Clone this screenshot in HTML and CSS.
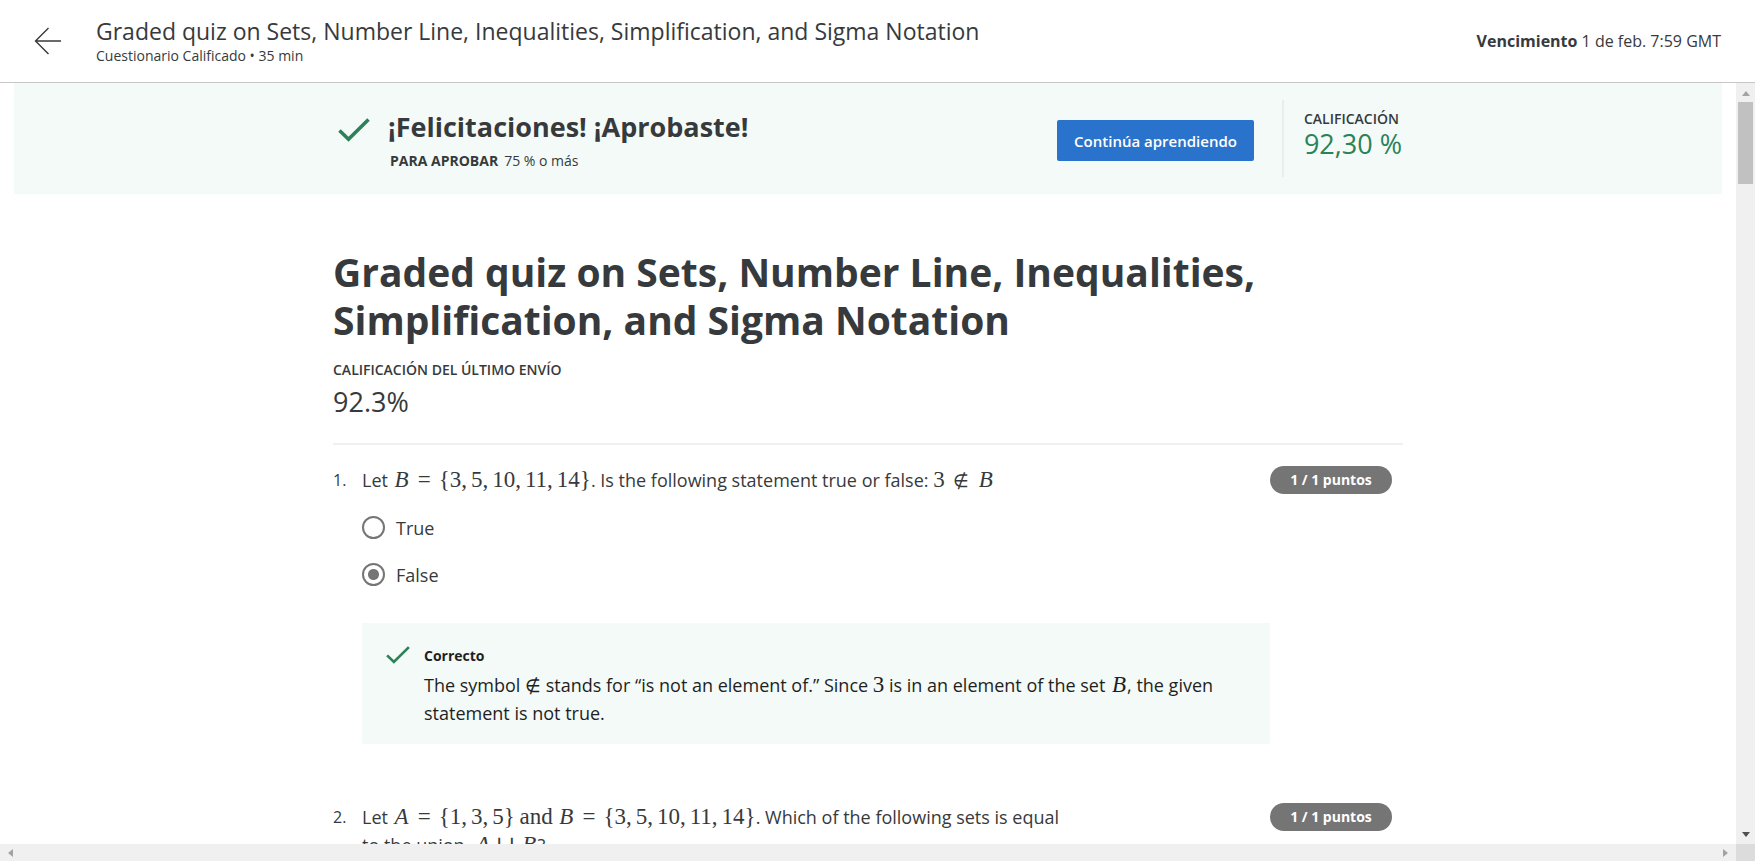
FILE: index.html
```html
<!DOCTYPE html>
<html lang="es">
<head>
<meta charset="utf-8">
<meta name="viewport" content="width=device-width, initial-scale=1">
<title>Graded quiz</title>
<link rel="stylesheet" href="styles.css">
</head>
<body>
<div class="page">
  <header class="topbar">
    <a class="back" href="#" aria-label="Volver">
      <svg viewBox="0 0 28 28" width="28" height="28" fill="none" stroke="currentColor" stroke-width="1.4"><path d="M27 14H1.5M14.500 1L1.500 14L14.500 27"/></svg>
    </a>
    <div class="topbar-text">
      <div class="topbar-title">Graded quiz on Sets, Number Line, Inequalities, Simplification, and Sigma Notation</div>
      <div class="topbar-sub">Cuestionario Calificado • 35 min</div>
    </div>
    <div class="due"><strong>Vencimiento</strong> 1 de feb. 7:59 GMT</div>
  </header>
  <main class="content">
    <section class="banner">
      <div class="banner-inner">
        <svg class="check" viewBox="0 0 32 24" width="32" height="24" fill="none" stroke="currentColor" stroke-width="3.6"><path d="M1.500 12.500L10.500 21.200L30.500 1.500"/></svg>
        <div class="banner-text">
          <h2>¡Felicitaciones! ¡Aprobaste!</h2>
          <p><strong>PARA APROBAR</strong>75 % o más</p>
        </div>
        <button class="continue" type="button">Continúa aprendiendo</button>
        <div class="grade">
          <div class="label">CALIFICACIÓN</div>
          <div class="grade-value">92,30 %</div>
        </div>
      </div>
    </section>
    <div class="column">
      <h1>Graded quiz on Sets, Number Line, Inequalities, Simplification, and Sigma Notation</h1>
      <div class="label">CALIFICACIÓN DEL ÚLTIMO ENVÍO</div>
      <div class="score">92.3%</div>
      <section class="question">
        <div class="number">1.</div>
        <div class="prompt" id="q1">Let <span class="math"><i>B</i><span class="rel">=</span>{3<span class="sep">,</span>5<span class="sep">,</span>10<span class="sep">,</span>11<span class="sep">,</span>14}</span>. Is the following statement true or false: <span class="math">3<span class="rel notin">∉</span><i>B</i></span></div>
        <div class="points">1 / 1 puntos</div>
        <div class="answers" role="radiogroup" aria-labelledby="q1">
          <label class="option"><input type="radio" name="q1">True</label>
          <label class="option"><input type="radio" name="q1" checked>False</label>
          <div class="feedback">
            <svg class="check" viewBox="0 0 32 24" width="24" height="18" fill="none" stroke="currentColor" stroke-width="3.6"><path d="M1.500 12.500L10.500 21.200L30.500 1.500"/></svg>
            <div>
              <div class="verdict">Correcto</div>
              <p>The symbol <span class="math notin">∉</span> stands for “is not an element of.” Since <span class="math">3</span> is in an element of the set <span class="math"><i>B</i></span>, the given statement is not true.</p>
            </div>
          </div>
        </div>
      </section>
      <section class="question">
        <div class="number">2.</div>
        <div class="prompt">Let <span class="math"><i>A</i><span class="rel">=</span>{1<span class="sep">,</span>3<span class="sep">,</span>5}</span> <span class="math">and</span> <span class="math"><i>B</i><span class="rel">=</span>{3<span class="sep">,</span>5<span class="sep">,</span>10<span class="sep">,</span>11<span class="sep">,</span>14}</span>. Which of the following sets is equal to the union&nbsp; <span class="math"><i>A</i><span class="op">∪</span><i>B</i></span>?</div>
        <div class="points">1 / 1 puntos</div>
      </section>
    </div>
  </main>
  <div class="vbar" aria-hidden="true">
    <span class="arrow up"></span>
    <span class="thumb"></span>
    <span class="arrow down"></span>
  </div>
  <div class="hbar" aria-hidden="true">
    <span class="arrow left"></span>
    <span class="arrow right"></span>
  </div>
  <div class="corner"></div>
</div>
</body>
</html>
```
FILE: styles.css
```css
* { box-sizing: border-box; }
body {
  margin: 0;
  background: #fff;
  color: #373a3c;
  font-family: "Open Sans", sans-serif;
  font-size: 18px;
}
h1, h2, p { margin: 0; }
.page {
  display: grid;
  grid-template: auto minmax(0, 1fr) 17px / minmax(0, 1fr) 19px;
  height: 100vh;
  overflow: hidden;
}
.topbar {
  grid-column: 1 / -1;
  display: flex;
  align-items: center;
  gap: 34px;
  padding: 16px 34px 16px;
  border-bottom: 1px solid #c7c7c7;
}
.back { display: flex; color: #373a3c; }
.topbar-text { flex: 1; }
.topbar-title { font-size: 23px; line-height: 31px; }
.topbar-sub { font-size: 14px; line-height: 18px; padding-bottom: 1px; }
.due { font-size: 16px; }

.content { overflow: hidden; }
.banner {
  margin: 0 14px;
  background: #f3faf8;
}
.banner-inner {
  display: flex;
  align-items: flex-start;
  max-width: 1070px;
  margin: 0 auto;
  padding: 17px 0 17px 5px;
}
.check { flex: none; color: #2b8259; }
.banner-inner .check { margin: 18px 18px 0 0; }
.banner-text { flex: 1; padding-top: 9px; }
.banner-text h2 { font-size: 27px; line-height: 36px; }
.banner-text p { padding: 6px 2px 0; font-size: 14px; line-height: 20px; }
.banner-text strong { margin-right: 6px; }
.continue {
  margin: 20px 28px 0 0;
  padding: 0 17px;
  height: 41px;
  border: 0;
  border-radius: 2px;
  background: #2a73cc;
  color: #fff;
  font: 600 15px "Open Sans", sans-serif;
}
.grade {
  min-height: 77px;
  padding: 9px 1px 0 20px;
  border-left: 2px solid #e8eeec;
}
.label { font-size: 14px; line-height: 20px; font-weight: 600; }
.grade-value { font-size: 27px; line-height: 30px; color: #2b8259; }

.column {
  max-width: 1070px;
  margin: 0 auto;
  padding-top: 54px;
}
h1 { font-size: 39px; line-height: 48px; }
.column > .label { margin-top: 16px; }
.score {
  padding: 4px 0 23px;
  font-size: 27px;
  line-height: 36px;
  border-bottom: 2px solid #f0f0f0;
}
.question {
  display: grid;
  grid-template-columns: 29px minmax(0, 1fr) 122px;
  align-items: start;
  padding: 21px 11px 0 0;
  margin-bottom: 38px;
}
.number { font-size: 16px; line-height: 28px; }
.prompt { max-width: 708px; line-height: 28px; }
.math {
  font-family: "Liberation Serif", "DejaVu Serif", serif;
  font-size: 23px;
  line-height: 1;
  white-space: nowrap;
}
.math i { margin: 0 1px 0 2px; }
.rel { margin: 0 8px; }
.op { margin: 0 5px; }
.sep { margin-right: 4px; }
.notin {
  font-family: "DejaVu Sans Light", "DejaVu Sans", sans-serif;
  font-size: 18px;
  font-weight: 200;
}
.points {
  border-radius: 14px;
  background: #757575;
  color: #fff;
  font-size: 14px;
  font-weight: 700;
  line-height: 28px;
  text-align: center;
}
.answers { grid-column: 2; padding-top: 10px; }
.option {
  display: flex;
  align-items: center;
  gap: 11px;
  height: 47px;
}
.option input {
  appearance: none;
  width: 23px;
  height: 23px;
  margin: 0;
  border: 2px solid #757575;
  border-radius: 50%;
}
.option input:checked {
  background: radial-gradient(circle, #757575 5px, transparent 6px);
}
.feedback {
  display: flex;
  gap: 14px;
  margin-top: 25px;
  padding: 22px 24px 17px;
  background: #f3faf8;
  color: #1f1f1f;
}
.feedback .check { margin-top: 1px; }
.verdict { font-size: 14px; font-weight: 700; line-height: 22px; }
.feedback p { margin-top: 4px; line-height: 28px; }

.vbar {
  display: flex;
  flex-direction: column;
  align-items: center;
  padding: 8px 0 7px;
  background: #f0f0f0;
}
.thumb { width: 15px; height: 82px; margin-top: 6px; background: #c1c1c1; }
.arrow { border: 4px solid transparent; }
.up { border-top: 0; border-bottom: 5px solid #a3a3a3; }
.down { margin-top: auto; border-bottom: 0; border-top: 5px solid #505050; }
.hbar {
  display: flex;
  align-items: center;
  justify-content: space-between;
  padding: 0 8px;
  background: #f0f0f0;
}
.left { border-left: 0; border-right: 5px solid #a3a3a3; }
.right { border-right: 0; border-left: 5px solid #a3a3a3; }
.corner { background: #dcdcdc; }
```
